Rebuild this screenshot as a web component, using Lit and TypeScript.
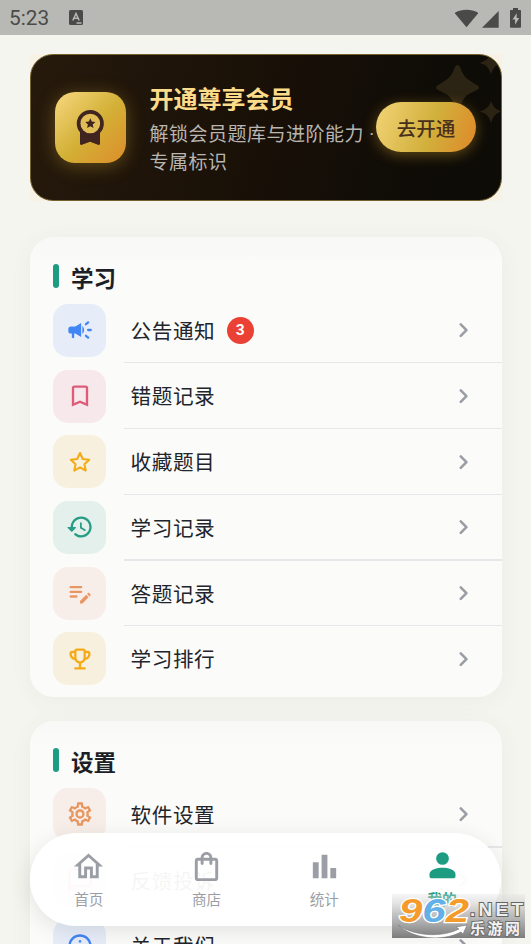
import { LitElement, html, css, svg } from "lit";
import { customElement, property } from "lit/decorators.js";
import { classMap } from "lit/directives/class-map.js";

const icons: Record<string, unknown> = {
  campaign: svg`<path d="M4 9c-1.100 0-2 .9-2 2v2c0 1.100.9 2 2 2h1v3.200c0 .5.400.8 1 .8s1-.3 1-.8V15h1l5 3V6L8 9H4zm11.500 3c0-1.330-.580-2.530-1.500-3.350v6.690c.920-.810 1.500-2.010 1.500-3.340z"/><path d="M19 12h2.200M17.100 17l1.900 1.500M17.100 7L19 5.500" fill="none" stroke="currentColor" stroke-width="2" stroke-linecap="round"/>`,
  bookmark: svg`<path d="M17 3H7c-1.100 0-1.990.9-1.990 2L5 21l7-3 7 3V5c0-1.100-.9-2-2-2zm0 15l-5-2.180L7 18V5h10v13z"/>`,
  star: svg`<path d="M12 4.300l2.350 5.100 5.550.650-4.100 3.800 1.100 5.500L12 16.600l-4.900 2.750 1.100-5.500-4.100-3.800 5.550-.650z" fill="none" stroke="currentColor" stroke-width="1.800" stroke-linejoin="round"/>`,
  history: svg`<path d="M13 3c-4.970 0-9 4.030-9 9H1.800c-.5 0-.7.600-.3.900l3.100 3.100c.2.200.5.200.7 0l3.100-3.100c.3-.3.1-.9-.4-.9H6c0-3.870 3.130-7 7-7s7 3.130 7 7-3.130 7-7 7c-1.700 0-3.200-.5-4.500-1.600-.9-.6-2 .6-1.300 1.400C8.700 20.200 10.700 21 13 21c4.970 0 9-4.030 9-9s-4.030-9-9-9zm-1 5.500v4.500l3.900 2.400c.9.400 1.500-.7.800-1.200l-3.200-1.900V8.500c0-.9-1.500-.9-1.500 0z"/>`,
  note: svg`<path d="M4 10h9c1.300 0 1.300 2 0 2H4c-1.300 0-1.300-2 0-2zm0-2h9c1.300 0 1.300-2 0-2H4C2.700 6 2.700 8 4 8zm0 8h5c1.300 0 1.300-2 0-2H4c-1.300 0-1.300 2 0 2zm14.010-3.130.710-.710c.390-.390 1.020-.390 1.410 0l.710.710c.390.390.390 1.020 0 1.410l-.710.710-2.120-2.120zm-.710.710-5.300 5.300V21h2.120l5.300-5.300-2.120-2.120z"/>`,
  trophy: svg`<path d="M19 5h-2c0-1.100-.9-2-2-2H9c-1.100 0-2 .9-2 2H5c-1.100 0-2 .9-2 2v1c0 2.550 1.920 4.630 4.390 4.940.630 1.500 1.980 2.630 3.610 2.960V19H8c-1.300 0-1.300 2 0 2h8c1.300 0 1.300-2 0-2h-3v-3.100c1.630-.330 2.980-1.460 3.610-2.960C19.080 12.630 21 10.550 21 8V7c0-1.100-.9-2-2-2zM5 8V7h2v3.820C5.840 10.400 5 9.300 5 8zm7 6c-1.650 0-3-1.350-3-3V5h6v6c0 1.650-1.350 3-3 3zm7-6c0 1.300-.840 2.400-2 2.820V7h2v1z"/>`,
  gear: svg`<path d="M19.430 12.980c.040-.320.070-.640.070-.980 0-.340-.030-.660-.070-.980l2.110-1.650c.190-.150.240-.420.120-.640l-2-3.460c-.090-.160-.260-.250-.440-.250-.060 0-.120.010-.170.030l-2.490 1c-.520-.4-1.080-.730-1.690-.980l-.380-2.650C14.460 2.180 14.250 2 14 2h-4c-.250 0-.460.180-.490.420l-.380 2.650c-.610.250-1.170.590-1.690.980l-2.490-1c-.060-.020-.120-.030-.180-.030-.170 0-.340.090-.430.250l-2 3.460c-.130.220-.070.490.120.640l2.110 1.650c-.040.320-.070.650-.070.980 0 .330.030.660.070.980l-2.110 1.650c-.190.150-.240.420-.120.640l2 3.460c.090.160.260.250.440.250.060 0 .120-.010.170-.030l2.490-1c.520.4 1.080.730 1.690.980l.380 2.650c.030.240.240.420.490.420h4c.250 0 .460-.180.490-.420l.380-2.650c.610-.250 1.170-.590 1.690-.980l2.490 1c.060.020.120.030.180.030.170 0 .340-.090.430-.250l2-3.460c.120-.220.070-.490-.120-.640l-2.110-1.650zm-1.980-1.710c.040.310.050.520.050.730 0 .210-.020.430-.050.730l-.140 1.130.890.7 1.080.840-.7 1.210-1.270-.510-1.040-.420-.9.680c-.430.320-.840.560-1.250.730l-1.060.430-.160 1.130-.2 1.350h-1.400l-.190-1.350-.160-1.130-1.060-.430c-.430-.180-.830-.410-1.230-.710l-.910-.7-1.060.430-1.270.510-.7-1.210 1.080-.840.890-.7-.140-1.130c-.030-.310-.050-.540-.050-.740s.020-.430.050-.730l.140-1.130-.890-.7-1.080-.840.7-1.210 1.270.510 1.040.420.9-.680c.430-.320.840-.560 1.250-.730l1.060-.430.160-1.130.2-1.350h1.390l.190 1.350.160 1.130 1.060.430c.430.180.830.410 1.230.710l.910.7 1.060-.430 1.270-.510.7 1.210-1.070.850-.890.7.140 1.130zM12 8c-2.210 0-4 1.790-4 4s1.790 4 4 4 4-1.790 4-4-1.790-4-4-4zm0 6c-1.100 0-2-.9-2-2s.9-2 2-2 2 .9 2 2-.9 2-2 2z"/>`,
  feedback: svg`<path d="M4 3h16a1 1 0 0 1 1 1v12a1 1 0 0 1-1 1H6l-3 3V4a1 1 0 0 1 1-1zM12 6v4.500M12 13v1" fill="none" stroke="currentColor" stroke-width="2"/>`,
  info: svg`<path d="M11 7h2v2h-2zm0 4h2v6h-2zm1-9C6.480 2 2 6.480 2 12s4.480 10 10 10 10-4.480 10-10S17.520 2 12 2zm0 18c-4.410 0-8-3.590-8-8s3.590-8 8-8 8 3.590 8 8-3.590 8-8 8z"/>`,
  chevron: svg`<path d="M9.200 7.200l4.900 4.900-4.900 4.900" fill="none" stroke="currentColor" stroke-width="2.200" stroke-linecap="round" stroke-linejoin="round"/>`,
  home: svg`<path d="M12 5.690l5 4.500V18h-2v-6H9v6H7v-7.810l5-4.500M12 3L2 12h3v8h6v-6h2v6h6v-8h3L12 3z"/>`,
  bag: svg`<path d="M18 6h-2c0-2.210-1.790-4-4-4S8 3.790 8 6H6c-1.100 0-2 .9-2 2v12c0 1.100.9 2 2 2h12c1.100 0 2-.9 2-2V8c0-1.100-.9-2-2-2zm-6-2c1.100 0 2 .9 2 2h-4c0-1.100.9-2 2-2zm6 16H6V8h2v2c0 .550.450 1 1 1s1-.450 1-1V8h4v2c0 .550.450 1 1 1s1-.450 1-1V8h2v12z"/>`,
  stats: svg`<path d="M4 9h4v11H4zm12 4h4v7h-4zm-6-9h4v16h-4z"/>`,
  person: svg`<circle cx="12" cy="6.500" r="4.350"/><path d="M3.100 17.200c0-3 5.300-4.300 8.900-4.300s8.900 1.300 8.900 4.300v1.600c0 .7-.5 1.200-1.200 1.200H4.300c-.7 0-1.200-.5-1.200-1.200z"/>`,
};

@customElement("ui-icon")
class UiIcon extends LitElement {
  @property() name = "";
  static styles = css`
    :host { display: block; flex: none; width: 28px; height: 28px; }
    .glyph { display: block; width: 100%; height: 100%; fill: currentColor; }
  `;
  render() {
    return html`<svg class="glyph" viewBox="0 0 24 24">${icons[this.name]}</svg>`;
  }
}

interface Row { label: string; icon: string; tone: string; badge?: number; }

@customElement("menu-section")
class MenuSection extends LitElement {
  @property() heading = "";
  @property({ attribute: false }) rows: Row[] = [];
  static styles = css`
    :host {
      display: block; box-sizing: border-box; border-radius: 24px; padding-bottom: 5px;
      background: linear-gradient(#f8f8f6, #fbfbf9 30px);
      box-shadow: 0 3px 22px rgba(80, 85, 50, 0.055);
    }
    .head { display: flex; align-items: center; height: 61px; padding: 20px 0 0 23.500px; gap: 12px; box-sizing: border-box; }
    .bar { width: 6px; height: 24px; border-radius: 3px; background: #1e9c82; margin-top: -2px; }
    .title { font-size: 22.500px; line-height: 30px; font-weight: 700; color: #1d1f27; margin-top: -1px; }
    .row { display: flex; align-items: center; height: 65.700px; padding: 0 24px 0 23.500px; position: relative; box-sizing: border-box; }
    .row + .row::before {
      content: ""; position: absolute; top: -1px; left: 94.500px; right: 0; height: 1.300px; background: #e6e7ea;
    }
    .tile { display: grid; place-items: center; width: 53px; height: 53px; border-radius: 15px; margin-right: 24.500px; }
    .blue { background: #e6edf8; color: #4285f4; }
    .pink { background: #f7e8ec; color: #de5c78; }
    .amber { background: #f8f0df; color: #f5ab18; }
    .teal { background: #e3f0ec; color: #279d85; }
    .orange { background: #f8eee9; color: #e79862; }
    .label { font-size: 20.600px; letter-spacing: 0.600px; line-height: 30px; color: #22242b; margin-bottom: 1.200px; }
    .badge {
      width: 27px; height: 27px; margin-left: 11.500px; border-radius: 50%;
      background: #eb4135; color: #fff; font: 700 15.500px/27px Roboto, sans-serif; text-align: center;
    }
    .go { margin-left: auto; color: #999da4; }
  `;
  render() {
    return html`
      <div class="head"><span class="bar"></span><span class="title">${this.heading}</span></div>
      ${this.rows.map((r) => html`
        <div class="row">
          <div class="tile ${r.tone}"><ui-icon name=${r.icon}></ui-icon></div>
          <span class="label">${r.label}</span>
          ${r.badge ? html`<span class="badge">${r.badge}</span>` : ""}
          <ui-icon class="go" name="chevron"></ui-icon>
        </div>`)}
    `;
  }
}

@customElement("app-root")
class AppRoot extends LitElement {
  static styles = css`
    :host {
      display: block; position: relative; width: 531px; height: 944px; overflow: hidden;
      background: #f4f5ef; font-family: "Noto Sans CJK SC", sans-serif;
    }
    .status { display: flex; align-items: center; height: 35px; background: #b8b9b4; color: #4a4b49; padding: 0 9px; }
    .clock { font: 400 20.800px/37px Roboto, sans-serif; margin-top: 2px; }
    .ime { width: 14px; height: 15px; margin-left: 20px; }
    .sys { margin-left: auto; width: 68px; height: 22px; }
    .page { display: flex; flex-direction: column; gap: 24px; padding: 19px 29.500px 0; }
    .wrap { background: #f7f2e3; margin-bottom: 12px; }
    .vip {
      position: relative; display: flex; align-items: center; box-sizing: border-box; height: 146.500px;
      border: 1.500px solid #76602c; border-radius: 23px; padding: 0 24px; overflow: hidden;
      background: linear-gradient(105deg, #261a0c, #191007 48%, #0e0c07 85%);
    }
    .sparkles { position: absolute; right: 1px; top: 0; width: 90px; height: 80px; fill: #2b2313; }
    .medal {
      flex: none; display: grid; place-items: center; width: 71px; height: 71px; border-radius: 20px;
      background: linear-gradient(135deg, #f7d880, #d3b036 52%, #dd8d2a);
      box-shadow: 0 3px 18px rgba(220, 175, 55, 0.35);
    }
    .medal-icon { width: 36px; height: 40px; }
    .copy { margin: 2px 0 0 24px; width: 236px; flex: none; }
    .name { font-size: 24px; line-height: 34px; font-weight: 700; color: #fcdc8a; }
    .desc { font-size: 19px; letter-spacing: 0.500px; line-height: 28px; color: #b9b5b0; margin-top: 4px; white-space: nowrap; }
    .dot { font-family: Roboto, sans-serif; line-height: 1; }
    .open {
      position: absolute; right: 24.500px; top: 47px; width: 100px; height: 50px; border-radius: 25px;
      font-size: 19.500px; line-height: 51px; font-weight: 500; color: #48301c; text-align: center;
      background: linear-gradient(110deg, #f3d476, #d1b03c 55%, #dd8f2c 92%);
      box-shadow: 0 3px 14px rgba(220, 165, 45, 0.4);
    }
    .nav {
      position: absolute; left: 30px; top: 833px; width: 471px; height: 93px; border-radius: 46.500px;
      display: flex; background: rgba(255, 255, 255, 0.955); box-shadow: 0 5px 22px rgba(0, 0, 0, 0.1);
    }
    .tab { flex: 1; display: flex; flex-direction: column; align-items: center; padding-top: 16px; color: #9b9fa5; }
    .tab ui-icon { width: 35px; height: 35px; }
    .tab-label { font-size: 14.600px; line-height: 22px; margin-top: 4px; }
    .tab.active { color: #1e9c82; }
    .active .tab-label { font-weight: 700; }
    .mark { position: absolute; left: 392px; top: 894px; width: 133px; height: 44px; }
    .digits { font: italic 700 34px "Liberation Sans", sans-serif; paint-order: stroke; stroke: #fff; stroke-width: 2.500px; }
    .net { font: 700 19px "Liberation Sans", sans-serif; fill: #eee; paint-order: stroke; stroke: #666; stroke-width: 2px; }
    .site { font: 700 15px "Noto Sans CJK SC", sans-serif; fill: #f3f3f3; paint-order: stroke; stroke: #707070; stroke-width: 2px; }
  `;

  private study: Row[] = [
    { label: "公告通知", icon: "campaign", tone: "blue", badge: 3 },
    { label: "错题记录", icon: "bookmark", tone: "pink" },
    { label: "收藏题目", icon: "star", tone: "amber" },
    { label: "学习记录", icon: "history", tone: "teal" },
    { label: "答题记录", icon: "note", tone: "orange" },
    { label: "学习排行", icon: "trophy", tone: "amber" },
  ];
  private settings: Row[] = [
    { label: "软件设置", icon: "gear", tone: "orange" },
    { label: "反馈投诉", icon: "feedback", tone: "pink" },
    { label: "关于我们", icon: "info", tone: "blue" },
  ];
  private tabs = [
    { label: "首页", icon: "home" },
    { label: "商店", icon: "bag" },
    { label: "统计", icon: "stats" },
    { label: "我的", icon: "person", active: true },
  ];

  render() {
    return html`
      <div class="status">
        <span class="clock">5:23</span>
        <svg class="ime" viewBox="0 0 14 15"><rect width="14" height="15" rx="1.500" fill="#4a4b49"/><path d="M3.800 10.500L7 3.500l3.200 7M5 8.300h4M7.500 13h5" fill="none" stroke="#b8b9b4" stroke-width="1.500"/></svg>
        <svg class="sys" viewBox="454 6 68 22" fill="#4a4b49">
          <path d="M466.500 26.300L455 12.600c-.2-.5-.1-.9.300-1.200 6.500-3.500 16-3.500 22.400 0 .4.300.5.700.3 1.200z"/>
          <path d="M482 26.700L498.700 10v16.700z"/>
          <path fill-rule="evenodd" d="M513 7h5v2h2.200c.5 0 .8.300.8.800v16c0 .5-.3.900-.8.900h-9.400c-.5 0-.8-.4-.8-.9v-16c0-.5.300-.8.800-.8h2.200zm3.700 5.200l-4.200 6.400h2.600v5.200l4.100-6.700h-2.500z"/>
        </svg>
      </div>
      <div class="page">
        <div class="wrap">
          <div class="vip">
            <svg class="sparkles" viewBox="410 55 90 80">
              <path d="M457.500 65c1.500 0 2.300 1 3 3 3 8 4.500 10 15.500 16.500 4 2.200 4 4.300 0 6-11 4.500-13 7.500-15.500 17-.8 4-5.200 4-6 0-2.500-9.500-4.500-12.500-15.500-17-4-1.700-4-3.800 0-6 11-6.500 12.500-8.500 15.500-16.500.7-2 1.500-3 3-3z"/>
              <path d="M491 101c3 7 4 7.500 10 10.500-6 2.500-7.500 4-10 11.500-2.500-7.500-4-9-11-11.500 7-3 8.500-4 11-10.500zM491 52c3 7 4 8 11 11-7 2.500-8.500 4-11 11.500-2.500-7.500-4-9-11-11.500 7-3 8.500-4 11-11z"/>
            </svg>
            <div class="medal">
              <svg class="medal-icon" viewBox="72 107 36 40" fill="#402420">
                <path d="M80 131h20v12.500c0 1.200-.8 1.700-2 1.200l-8-3-8 3c-1.200.5-2 0-2-1.200z"/>
                <circle cx="90.300" cy="123.500" r="11.700" fill="#e0bd57" stroke="#402420" stroke-width="3.700"/>
                <path d="M90.300 118.300l1.500 3.300 3.600.4-2.700 2.400.8 3.600-3.200-1.800-3.200 1.800.8-3.600-2.700-2.400 3.600-.4z"/>
              </svg>
            </div>
            <div class="copy">
              <div class="name">开通尊享会员</div>
              <div class="desc">解锁会员题库与进阶能力<span class="dot"> ·</span><br />专属标识</div>
            </div>
            <div class="open">去开通</div>
          </div>
        </div>
        <menu-section heading="学习" .rows=${this.study}></menu-section>
        <menu-section heading="设置" .rows=${this.settings}></menu-section>
      </div>
      <nav class="nav">
        ${this.tabs.map((t) => html`
          <div class=${classMap({ tab: true, active: !!t.active })}>
            <ui-icon name=${t.icon}></ui-icon><span class="tab-label">${t.label}</span>
          </div>`)}
      </nav>
      <svg class="mark" viewBox="0 0 133 44">
        <defs><linearGradient id="shade" x1="0" y1="0" x2="0" y2="1">
          <stop offset="0" stop-color="#ddd" stop-opacity=".3"/><stop offset=".45" stop-color="#b4b4b4" stop-opacity=".8"/><stop offset="1" stop-color="#7c7c7c"/>
        </linearGradient></defs>
        <rect width="133" height="44" fill="url(#shade)"/>
        <text class="digits" x="7" y="28" textLength="70" lengthAdjust="spacingAndGlyphs"><tspan fill="#f59b2c">9</tspan><tspan fill="#62b0e6">6</tspan><tspan fill="#f59b2c">2</tspan></text>
        <path d="M6 31c16 11 43 13 61 4l-3-2 11-2-4 9-2-2C50 48 21 45 6 31z" fill="#fff" stroke="#777" stroke-width=".6"/>
        <text class="net" x="78" y="22" textLength="53">.NET</text>
        <text class="site" x="78" y="39.500" textLength="50">乐游网</text>
      </svg>
    `;
  }
}
